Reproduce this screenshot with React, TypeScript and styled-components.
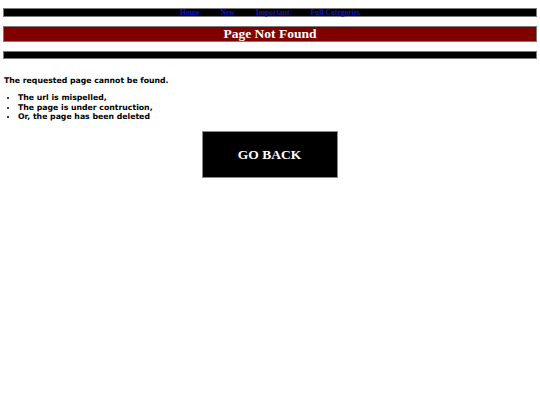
import React from 'react';
import styled, { createGlobalStyle } from 'styled-components';

const GlobalStyle = createGlobalStyle`
  html, body {
    margin: 0;
    background: #ffffff;
  }
  body {
    padding: 8px 3px 0;
    font-family: "DejaVu Sans", Verdana, sans-serif;
  }
`;

const Bar = styled.div<{ $bg: string; $height: number }>`
  box-sizing: border-box;
  height: ${(p) => p.$height}px;
  background: ${(p) => p.$bg};
  border: 1px solid #7a7a7a;
  display: flex;
  align-items: center;
  justify-content: center;
  margin-bottom: 9px;
`;

const NavLinks = styled.nav`
  display: flex;
  gap: 21px;
  align-items: center;
`;

const NavLink = styled.a`
  font-family: "Liberation Serif", "Times New Roman", serif;
  font-weight: bold;
  font-size: 7.6px;
  line-height: 7px;
  color: #1414c0;
  text-decoration: none;
`;

const Title = styled.h1`
  margin: 0;
  font-family: "Liberation Serif", "Times New Roman", serif;
  font-weight: bold;
  font-size: 13.5px;
  line-height: 14px;
  color: #ffffff;
`;

const Message = styled.p`
  margin: 17px 0 0 1px;
  font-weight: bold;
  font-size: 7.75px;
  line-height: 9px;
  color: #000000;
`;

const Reasons = styled.ul`
  margin: 8px 0 0;
  padding-left: 15px;
  font-weight: bold;
  font-size: 7.75px;
  line-height: 9.5px;
  color: #000000;

  li::marker {
    font-size: 8px;
  }
`;

const ButtonRow = styled.div`
  display: flex;
  justify-content: center;
  margin-top: 9.5px;
`;

const BackButton = styled.a`
  box-sizing: border-box;
  width: 136px;
  height: 47px;
  display: flex;
  align-items: center;
  justify-content: center;
  background: #000000;
  border: 1px solid #8a8a8a;
  font-family: "Liberation Serif", "Times New Roman", serif;
  font-weight: bold;
  font-size: 13.5px;
  color: #ffffff;
  text-decoration: none;
  margin-left: -1px;
`;

export default function App() {
  const links = ['Home', 'New', 'Important', 'Full Categories'];
  const reasons = [
    'The url is mispelled,',
    'The page is under contruction,',
    'Or, the page has been deleted',
  ];

  return (
    <>
      <GlobalStyle />
      <Bar $bg="#000000" $height={9}>
        <NavLinks>
          {links.map((name) => (
            <NavLink key={name} href="#">{name}</NavLink>
          ))}
        </NavLinks>
      </Bar>
      <Bar $bg="#800000" $height={16}>
        <Title>Page Not Found</Title>
      </Bar>
      <Bar $bg="#000000" $height={8} />
      <Message>The requested page cannot be found.</Message>
      <Reasons>
        {reasons.map((r) => (
          <li key={r}>{r}</li>
        ))}
      </Reasons>
      <ButtonRow>
        <BackButton href="#">GO BACK</BackButton>
      </ButtonRow>
    </>
  );
}
